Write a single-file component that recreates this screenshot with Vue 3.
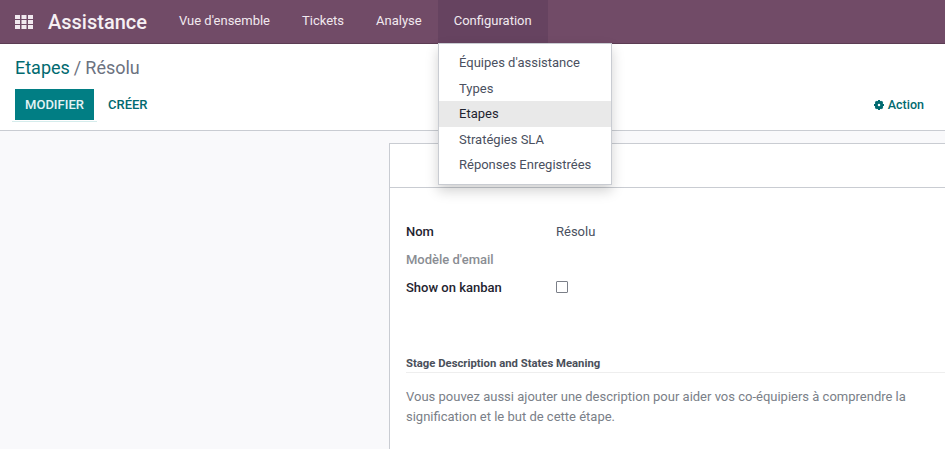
<script setup>
const navItems = ['Vue d\'ensemble', 'Tickets', 'Analyse', 'Configuration'];
const menuItems = ['Équipes d\'assistance', 'Types', 'Etapes', 'Stratégies SLA', 'Réponses Enregistrées'];
</script>

<template>
  <div class="app">
    <header class="navbar">
      <svg class="apps" width="18" height="14" viewBox="0 0 18 14">
        <g fill="#f1e9ef">
          <rect x="0" y="0" width="5" height="4" /><rect x="6.5" y="0" width="5" height="4" /><rect x="13" y="0" width="5" height="4" />
          <rect x="0" y="5" width="5" height="4" /><rect x="6.5" y="5" width="5" height="4" /><rect x="13" y="5" width="5" height="4" />
          <rect x="0" y="10" width="5" height="4" /><rect x="6.5" y="10" width="5" height="4" /><rect x="13" y="10" width="5" height="4" />
        </g>
      </svg>
      <span class="brand">Assistance</span>
      <nav class="nav">
        <a v-for="item in navItems" :key="item" class="nav-item" :class="{ active: item === 'Configuration' }">{{ item }}</a>
      </nav>
      <div class="dropdown">
        <a v-for="item in menuItems" :key="item" class="drop-item" :class="{ hover: item === 'Etapes' }">{{ item }}</a>
      </div>
    </header>

    <section class="control">
      <div class="crumbs"><span class="link">Etapes</span><span class="sep">/</span><span class="current">Résolu</span></div>
      <div class="actions">
        <div class="buttons">
          <button class="btn primary">MODIFIER</button>
          <button class="btn plain">CRÉER</button>
        </div>
        <div class="action">
          <svg width="10" height="10" viewBox="0 0 20 20">
            <circle cx="10" cy="10" r="5.5" fill="none" stroke="#016a70" stroke-width="6" />
            <path stroke="#016a70" stroke-width="4" d="M10 0v4M10 16v4M0 10h4M16 10h4M3 3l3 3M14 14l3 3M17 3l-3 3M6 14l-3 3" />
          </svg>
          <span>Action</span>
        </div>
      </div>
    </section>

    <main class="content">
      <div class="sheet">
        <div class="sheet-head"></div>
        <div class="sheet-body">
          <div class="row"><label class="lbl">Nom</label><span class="val">Résolu</span></div>
          <div class="row"><label class="lbl muted">Modèle d'email</label></div>
          <div class="row"><label class="lbl">Show on kanban</label><span class="check"></span></div>
          <div class="separator">Stage Description and States Meaning</div>
          <p class="desc">Vous pouvez aussi ajouter une description pour aider vos co-équipiers à comprendre la signification et le but de cette étape.</p>
        </div>
      </div>
    </main>
  </div>
</template>

<style scoped>
.app {
  width: 945px;
  height: 449px;
  overflow: hidden;
  display: flex;
  flex-direction: column;
  font-family: Roboto, sans-serif;
  font-size: 13px;
  color: #4c4c4c;
  background: #f9f9fb;
}

.navbar {
  position: relative;
  flex: none;
  height: 44px;
  box-sizing: border-box;
  display: flex;
  align-items: center;
  background: #714b67;
  border-bottom: 1px solid #5b3c53;
  color: #f1e9ef;
}

.apps {
  margin-left: 15px;
}

.brand {
  margin-left: 15px;
  font-size: 20px;
  font-weight: 500;
  color: #f6f0f4;
}

.nav {
  display: flex;
  height: 100%;
  margin-left: 16px;
}

.nav-item {
  display: flex;
  align-items: center;
  padding: 0 16px 2px;
  font-size: 13px;
}

.nav-item.active {
  background: #664360;
}

.dropdown {
  position: absolute;
  left: 438px;
  top: 43px;
  width: 174px;
  height: 142px;
  box-sizing: border-box;
  padding-top: 6px;
  background: #fff;
  border: 1px solid #c9ccd2;
  box-shadow: 0 6px 12px rgba(0, 0, 0, 0.18);
  z-index: 2;
}

.drop-item {
  display: block;
  height: 25.5px;
  line-height: 25.5px;
  padding-left: 20px;
  font-size: 13px;
  color: #4a5060;
}

.drop-item.hover {
  background: #e9e9e9;
  color: #1f2430;
}

.control {
  flex: none;
  height: 87px;
  box-sizing: border-box;
  padding: 13px 21px 0 15px;
  background: #fff;
  border-bottom: 1px solid #c9ccd2;
}

.crumbs {
  font-size: 18px;
  line-height: 22px;
}

.link {
  color: #016a70;
}

.sep {
  margin: 0 4px;
  color: #6c7280;
}

.current {
  color: #6c7280;
}

.actions {
  display: flex;
  align-items: center;
  justify-content: space-between;
  margin-top: 10px;
}

.buttons {
  display: flex;
}

.btn {
  height: 31px;
  border: 0;
  font-family: inherit;
  font-size: 13px;
  font-weight: 500;
  padding: 0 10px;
  background: none;
}

.primary {
  position: relative;
  width: 79px;
  padding: 0;
  background: #017e84;
  color: #e4f3f4;
}

/* focus ring left under the button */
.primary::after {
  content: '';
  position: absolute;
  left: -3px;
  right: -3px;
  bottom: -2px;
  height: 1px;
  background: #d5ecec;
}

.plain {
  margin-left: 4px;
  color: #016a70;
}

.action {
  display: flex;
  align-items: center;
  gap: 4px;
  font-size: 12.5px;
  font-weight: 500;
  color: #016a70;
}

.content {
  flex: 1;
  padding: 12px 0 0 389px;
}

.sheet {
  width: 620px;
  height: 320px;
  background: #fff;
  border: 1px solid #c9ccd2;
}

.sheet-head {
  height: 43px;
  border-bottom: 1px solid #c9ccd2;
}

.sheet-body {
  padding: 29px 0 0 16px;
}

.row {
  display: flex;
  align-items: center;
  height: 28px;
}

.lbl {
  width: 150px;
  font-size: 13px;
  font-weight: 500;
  color: #1f2430;
}

.lbl.muted {
  color: #8a8d93;
}

.val {
  color: #4a5060;
}

.check {
  width: 10px;
  height: 10px;
  border: 1px solid #7b7f88;
  border-radius: 1px;
}

.separator {
  margin-top: 56px;
  width: 560px;
  padding-bottom: 2px;
  font-size: 11.3px;
  font-weight: 700;
  color: #4a4f5a;
  border-bottom: 1px solid #eeeeee;
}

.desc {
  margin: 14px 0 0;
  width: 510px;
  font-size: 13px;
  line-height: 20px;
  color: #7a8088;
}
</style>
